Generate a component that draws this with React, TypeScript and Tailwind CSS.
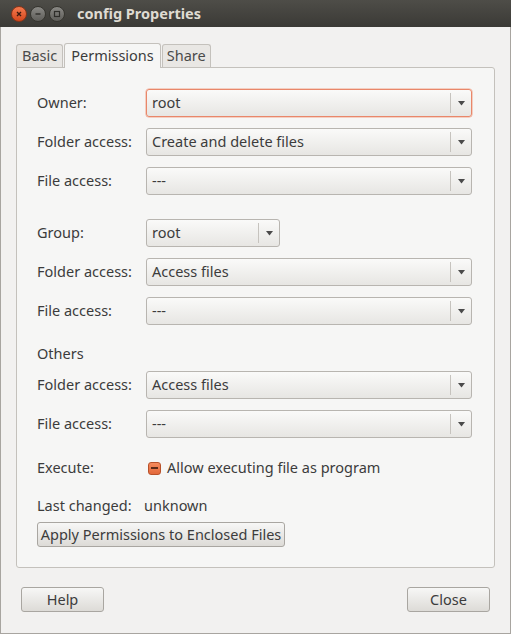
import React from "react";

const font = { fontFamily: '"Noto Sans", "Open Sans", "Liberation Sans", sans-serif' };

function Combo({ value, width = "w-[326px]", focused = false }: { value: string; width?: string; focused?: boolean }) {
  return (
    <div
      className={`${width} h-[28px] flex items-center rounded-[3px] border bg-gradient-to-b from-[#fafaf9] to-[#e7e6e3] ${
        focused ? "border-[#e9876a] shadow-[0_0_0_0.5px_#f0a890]" : "border-[#b8b5b0]"
      }`}
    >
      <span className="flex-1 pl-[5px] text-[14.5px] text-[#3c3c3c] whitespace-nowrap">{value}</span>
      <div className="h-[20px] w-px bg-[#c6c3be]" />
      <div className="w-[20px] flex justify-center">
        <svg width="9" height="6" viewBox="0 0 9 6">
          <path d="M1 1h7L4.5 5.5z" fill="#4a4a4a" />
        </svg>
      </div>
    </div>
  );
}

function Row({ label, children, className = "" }: { label: string; children: React.ReactNode; className?: string }) {
  return (
    <div className={`flex items-center ${className}`}>
      <span className="w-[109px] text-[14.5px] text-[#3c3c3c]">{label}</span>
      {children}
    </div>
  );
}

function Button({ children, className = "" }: { children: React.ReactNode; className?: string }) {
  return (
    <div
      className={`h-[25px] flex items-center justify-center rounded-[3px] border border-[#a9a6a1] bg-gradient-to-b from-[#f7f7f6] to-[#dddbd7] text-[14.5px] text-[#3c3c3c] ${className}`}
    >
      {children}
    </div>
  );
}

function TitleButton({ kind }: { kind: "close" | "min" | "max" }) {
  const close = kind === "close";
  return (
    <div
      className={`w-[16px] h-[16px] rounded-full flex items-center justify-center border ${
        close
          ? "bg-gradient-to-b from-[#f47a4e] to-[#d4461b] border-[#8a3418]"
          : "bg-gradient-to-b from-[#8a8985] to-[#5f5e5a] border-[#36352f]"
      }`}
    >
      <svg width="10" height="10" viewBox="0 0 10 10">
        {kind === "close" && <path d="M3 3l4 4M7 3l-4 4" stroke="#3a1a10" strokeWidth="1.4" />}
        {kind === "min" && <path d="M2.5 5h5" stroke="#2e2d29" strokeWidth="1.4" />}
        {kind === "max" && <rect x="2.5" y="2.5" width="5" height="5" fill="none" stroke="#2e2d29" strokeWidth="1.2" />}
      </svg>
    </div>
  );
}

export default function App() {
  return (
    <div className="w-[511px] h-[634px] flex flex-col bg-[#f2f1f0]" style={font}>
      {/* title bar */}
      <div className="h-[27px] flex items-center bg-gradient-to-b from-[#4e4d48] to-[#3b3a36] pl-[11px]">
        <div className="flex items-center gap-[3px]">
          <TitleButton kind="close" />
          <TitleButton kind="min" />
          <TitleButton kind="max" />
        </div>
        <span className="ml-[12px] text-[14.5px] font-bold text-[#dfdbd2]">config Properties</span>
      </div>

      <div className="flex-1 flex flex-col border-x border-b border-[#a8a5a0] px-[15px]">
        {/* tabs */}
        <div className="flex items-end mt-[14px] h-[26px] gap-[1px]">
          <div className="h-[23px] px-[5px] flex items-center border border-b-0 border-[#c4c1bc] rounded-t-[3px] bg-[#e9e7e4] text-[14.5px] text-[#4a4a4a]">
            Basic
          </div>
          <div className="h-[25px] px-[6px] flex items-center border border-b-0 border-[#c4c1bc] rounded-t-[3px] bg-[#f6f6f5] text-[14.5px] text-[#3c3c3c] relative -mb-px z-10">
            Permissions
          </div>
          <div className="h-[23px] px-[4px] flex items-center border border-b-0 border-[#c4c1bc] rounded-t-[3px] bg-[#e9e7e4] text-[14.5px] text-[#4a4a4a]">
            Share
          </div>
        </div>

        {/* notebook page */}
        <div className="flex flex-col border border-[#c4c1bc] rounded-b-[3px] rounded-tr-[3px] bg-[#f6f6f5] pl-[20px] pt-[21px] pb-[20px]">
          <Row label="Owner:">
            <Combo value="root" focused />
          </Row>
          <Row label="Folder access:" className="mt-[11px]">
            <Combo value="Create and delete files" />
          </Row>
          <Row label="File access:" className="mt-[11px]">
            <Combo value="---" />
          </Row>

          <Row label="Group:" className="mt-[24px]">
            <Combo value="root" width="w-[134px]" />
          </Row>
          <Row label="Folder access:" className="mt-[11px]">
            <Combo value="Access files" />
          </Row>
          <Row label="File access:" className="mt-[11px]">
            <Combo value="---" />
          </Row>

          <div className="mt-[19px] h-[20px] flex items-center text-[14.5px] text-[#3c3c3c]">Others</div>
          <Row label="Folder access:" className="mt-[7px]">
            <Combo value="Access files" />
          </Row>
          <Row label="File access:" className="mt-[11px]">
            <Combo value="---" />
          </Row>

          <Row label="Execute:" className="mt-[20px] h-[20px]">
            <div className="ml-[2px] w-[13px] h-[13px] rounded-[3px] border border-[#b8512a] bg-gradient-to-b from-[#f48a5c] to-[#e3683a] flex items-center justify-center">
              <div className="w-[7px] h-[2px] bg-[#5a2a18]" />
            </div>
            <span className="ml-[6px] text-[14.5px] text-[#3c3c3c]">Allow executing file as program</span>
          </Row>

          <div className="mt-[18px] h-[20px] flex items-center text-[14.5px] text-[#3c3c3c]">
            <span className="w-[107px]">Last changed:</span>
            <span>unknown</span>
          </div>

          <Button className="mt-[6px] w-[248px]">Apply Permissions to Enclosed Files</Button>
        </div>

        {/* footer */}
        <div className="flex justify-between mt-[19px] px-[5px]">
          <Button className="w-[83px]">Help</Button>
          <Button className="w-[83px]">Close</Button>
        </div>
      </div>
    </div>
  );
}
